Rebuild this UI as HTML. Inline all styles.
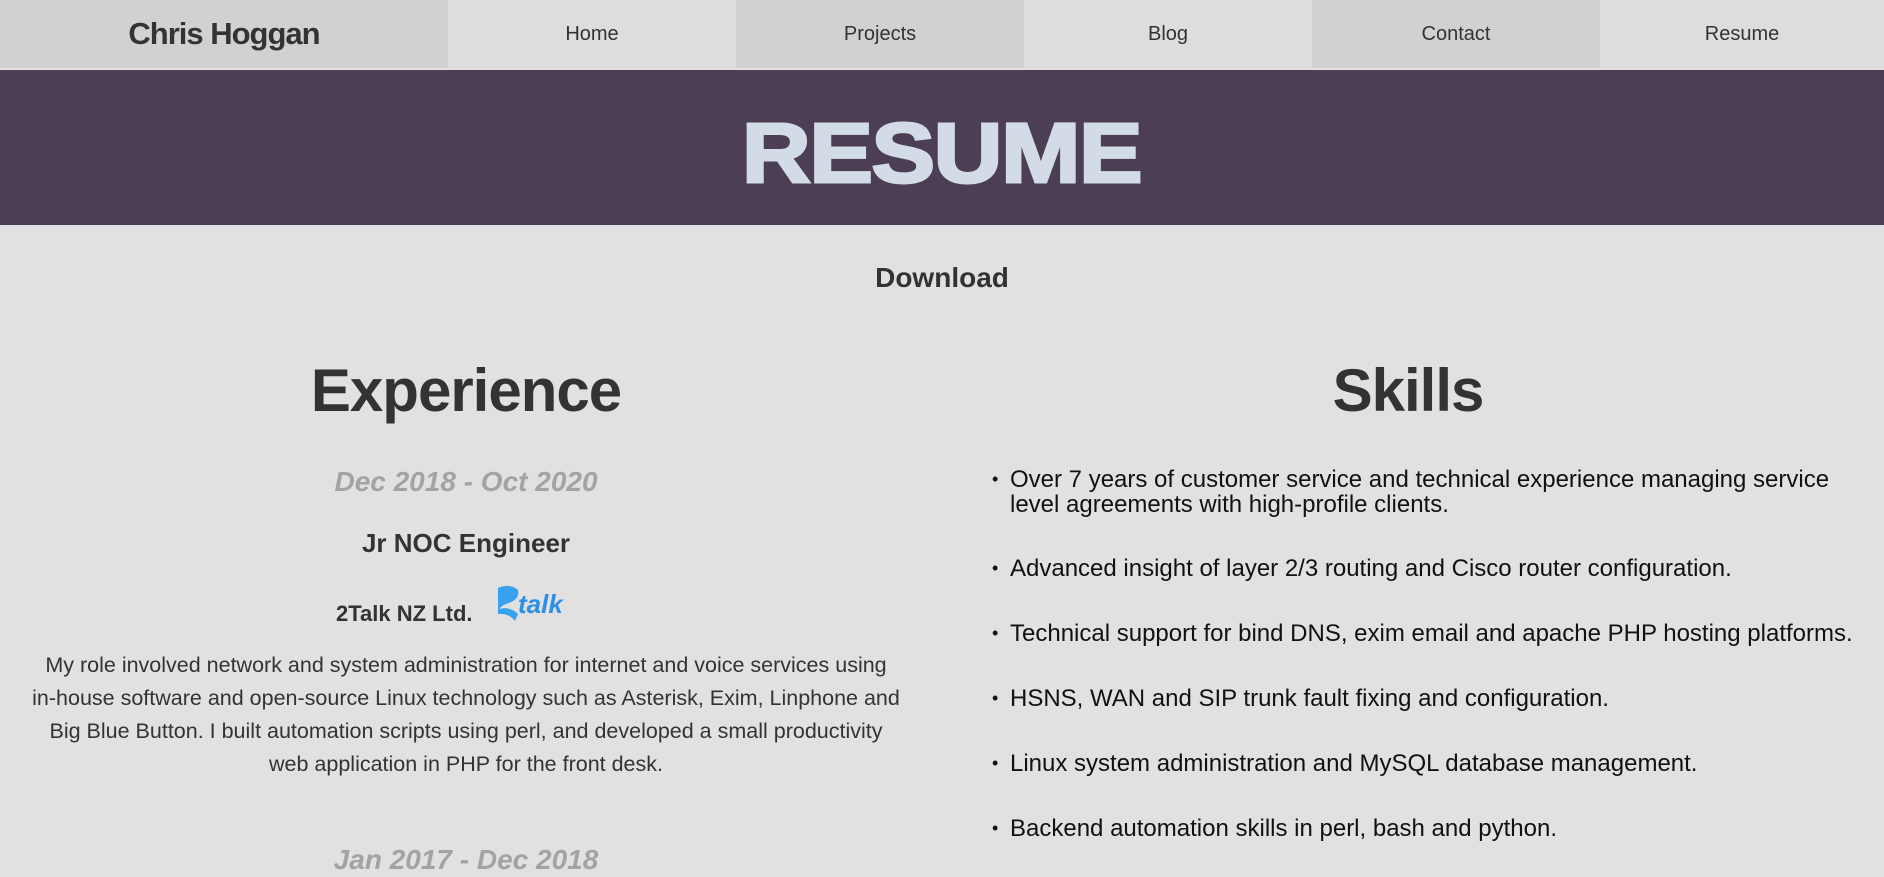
<!DOCTYPE html>
<html><head><meta charset="utf-8"><style>
*{margin:0;padding:0;box-sizing:border-box}
body{width:1884px;height:877px;overflow:hidden;background:#e1e1e1;font-family:"Liberation Sans",sans-serif;color:#333;position:relative}
.nav{position:absolute;top:0;height:68px;display:flex;align-items:center;justify-content:center;font-size:20px;color:#333}
.a{background:#d1d1d1}.b{background:#dddddd}
.banner{position:absolute;top:70px;left:0;width:1884px;height:155px;background:#4c3f55;text-align:center}
.banner span{display:inline-block;font-weight:900;font-size:84px;color:#d3dce6;line-height:155px;letter-spacing:-1px;transform:scaleX(1.13);padding-top:6px;-webkit-text-stroke:3px #d3dce6}
.c{position:absolute;text-align:center}
ul{position:absolute;left:1010px;list-style:none;color:#111;font-size:24px}
ul li{position:absolute;white-space:nowrap;line-height:25px}
ul li:before{content:"•";position:absolute;left:-18px;font-size:18px}
</style></head><body>
<div class="nav a" style="left:0;width:448px;font-size:31px;font-weight:bold;letter-spacing:-1px">Chris Hoggan</div>
<div class="nav b" style="left:448px;width:288px">Home</div>
<div class="nav a" style="left:736px;width:288px">Projects</div>
<div class="nav b" style="left:1024px;width:288px">Blog</div>
<div class="nav a" style="left:1312px;width:288px">Contact</div>
<div class="nav b" style="left:1600px;width:284px">Resume</div>
<div class="banner"><span>RESUME</span></div>
<div class="c" style="left:0;width:1884px;top:262px;font-size:28px;font-weight:bold">Download</div>
<div class="c" style="left:0;width:932px;top:356px;font-size:60px;font-weight:bold;letter-spacing:-1px">Experience</div>
<div class="c" style="left:932px;width:952px;top:356px;font-size:60px;font-weight:bold;letter-spacing:-1px">Skills</div>
<div class="c" style="left:0;width:932px;top:466px;font-size:28px;font-weight:bold;font-style:italic;color:#a3a3a3">Dec 2018 - Oct 2020</div>
<div class="c" style="left:0;width:932px;top:528px;font-size:26px;font-weight:bold">Jr NOC Engineer</div>
<div class="c" style="left:336px;top:601px;font-size:22px;font-weight:bold">2Talk NZ Ltd.</div>
<svg style="position:absolute;left:496px;top:584px" width="82" height="38" viewBox="0 0 82 38">
<path d="M2 4 Q14 -1 22 6 Q24 15 13 19 Q6 21 3 25 Q14 22 22 30 L19 37 Q13 29 2 30 Z" fill="#3aa0f0"/>
<text x="22" y="29" font-family="Liberation Sans" font-style="italic" font-weight="bold" font-size="26" fill="#2d8fe8">talk</text>
</svg>
<div class="c" style="left:30px;width:872px;top:649px;font-size:21.5px;line-height:33px;color:#333">My role involved network and system administration for internet and voice services using in&#8209;house software and open&#8209;source Linux technology such as Asterisk, Exim, Linphone and Big Blue Button. I built automation scripts using perl, and developed a small productivity web application in PHP for the front desk.</div>
<div class="c" style="left:0;width:932px;top:844px;font-size:28px;font-weight:bold;font-style:italic;color:#a3a3a3">Jan 2017 - Dec 2018</div>
<ul style="top:0">
<li style="top:467px">Over 7 years of customer service and technical experience managing service<br>level agreements with high-profile clients.</li>
<li style="top:556px">Advanced insight of layer 2/3 routing and Cisco router configuration.</li>
<li style="top:621px">Technical support for bind DNS, exim email and apache PHP hosting platforms.</li>
<li style="top:686px">HSNS, WAN and SIP trunk fault fixing and configuration.</li>
<li style="top:751px">Linux system administration and MySQL database management.</li>
<li style="top:816px">Backend automation skills in perl, bash and python.</li>
</ul>
</body></html>
